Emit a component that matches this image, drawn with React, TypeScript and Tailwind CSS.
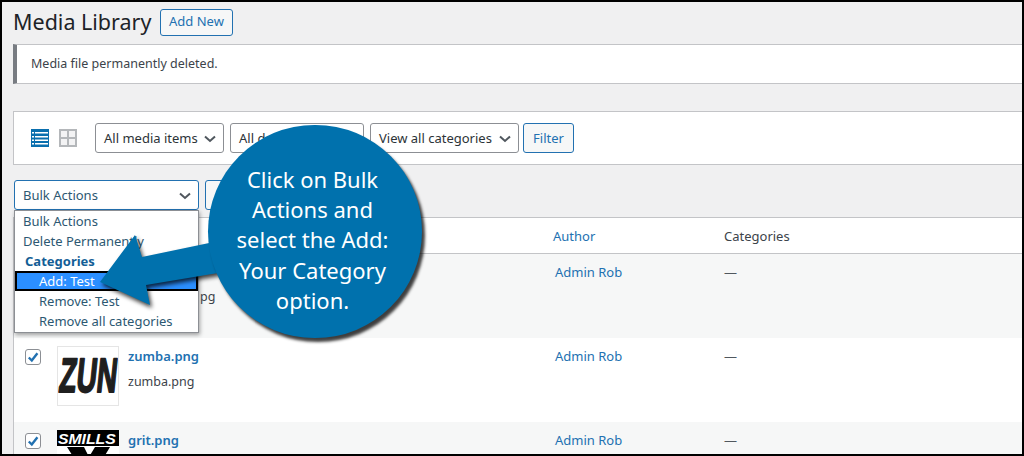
const segoe = "font-['Noto_Sans',sans-serif]";

function Chevron({ className = "text-[#50575e]" }: { className?: string }) {
    return (
        <svg width="12" height="8" viewBox="0 0 12 8" className={className} fill="none" stroke="currentColor" strokeWidth="2">
            <path d="M1 1.5 6 6l5-4.5" />
        </svg>
    );
}

function SelectBox({ label, width }: { label: string; width: string }) {
    return (
        <div className={`flex h-[30px] items-center justify-between rounded-[3px] border border-[#8c8f94] bg-white pl-2 pr-[7px] pt-[1px] text-[13px] text-[#2c3338] ${width}`}>
            <span>{label}</span>
            <Chevron />
        </div>
    );
}

function ListIcon() {
    return (
        <svg width="18" height="18" viewBox="0 0 18 18" className="text-[#0a6fae]">
            <path fill="currentColor" d="M0 0h18v18H0z" />
            <path fill="#fff" d="M4 3h13v1.5H4zM4 7h13v1.5H4zM4 10.500h13V12H4zM4 14h13v1.500H4zM1 3h2v1.500H1zM1 7h2v1.500H1zM1 10.500h2V12H1zM1 14h2v1.500H1z" />
        </svg>
    );
}

function GridIcon() {
    return (
        <svg width="18" height="18" viewBox="0 0 18 18">
            <path fill="#b4b7ba" d="M0 0h18v18H0z" />
            <path fill="#f3f3f4" d="M2 2h6v6H2zM10 2h6v6h-6zM2 10h6v6H2zM10 10h6v6h-6z" />
        </svg>
    );
}

function Checkbox() {
    return (
        <div className="flex h-4 w-4 items-center justify-center rounded-[3px] border border-[#8c8f94] bg-white">
            <svg width="12" height="12" viewBox="0 0 12 12" fill="none" stroke="#2271b1" strokeWidth="2.400">
                <path d="M1.800 6.500 4.800 9.500 10.400 2.200" />
            </svg>
        </div>
    );
}

function MediaRow({ title, file, thumb, bg, check = true }: { title: string; file: string; thumb: React.ReactNode; bg: string; check?: boolean }) {
    return (
        <div className={`flex h-[84px] ${bg}`}>
            <div className="w-[43px] shrink-0 pl-[11px] pt-[11px]">{check && <Checkbox />}</div>
            <div className="w-[71px] shrink-0 pt-2">{thumb}</div>
            <div className="w-[427px] shrink-0 pt-2">
                <div className="text-[13px] font-semibold leading-5 text-[#2271b1]">{title}</div>
                <div className="mt-[6px] text-[12.500px] leading-5 text-[#3c434a]">{file}</div>
            </div>
            <div className="w-[169px] shrink-0 pt-2 text-[13px] leading-5 text-[#2271b1]">Admin Rob</div>
            <div className="pt-2 text-[13px] leading-5 text-[#50575e]">—</div>
        </div>
    );
}

export default function App() {
    return (
        <div className={`relative h-[456px] w-[1024px] overflow-hidden border-x-2 border-y-2 border-black bg-[#f0f0f1] ${segoe}`}>
            <div className="flex h-[42px] items-center pb-[2px] pl-[11px]">
                <h1 className="w-[138px] whitespace-nowrap text-[21.500px] font-normal leading-none text-[#1d2327]">Media Library</h1>
                <div className="ml-[9px] flex h-[27px] w-[73px] items-center justify-center rounded-[3px] border border-[#2271b1] bg-[#f6f7f7] text-[13px] text-[#2271b1]">Add New</div>
            </div>

            <div className="ml-[11px] flex h-[40px] items-center border border-l-4 border-r-0 border-[#c3c4c7] border-l-[#787c82] bg-white pl-[14px] pt-[1px] text-[12.500px] text-[#3c434a]">
                Media file permanently deleted.
            </div>

            <div className="ml-[11px] mt-[27px] flex h-[54px] items-center border border-r-0 border-[#c3c4c7] bg-white pl-[17px]">
                <ListIcon />
                <div className="ml-[10px]"><GridIcon /></div>
                <div className="ml-[18px] flex gap-[6px]">
                    <SelectBox label="All media items" width="w-[129px]" />
                    <SelectBox label="All dates" width="w-[134px]" />
                    <SelectBox label="View all categories" width="w-[149px]" />
                </div>
                <div className="ml-1 flex h-[30px] w-[51px] items-center justify-center rounded-[3px] border border-[#2271b1] bg-[#f6f7f7] pt-[1px] text-[13px] text-[#2271b1]">Filter</div>
            </div>

            <div className="ml-3 mt-[15px] flex gap-[6px]">
                <div className="flex h-[30px] w-[185px] items-center justify-between rounded-[3px] border border-[#2271b1] bg-white pl-2 pr-[7px] pt-[1px] text-[13px] text-[#2c5872]">
                    <span>Bulk Actions</span>
                    <Chevron />
                </div>
                <div className="h-[30px] w-[60px] rounded-[3px] border border-[#2271b1] bg-[#f6f7f7]" />
            </div>

            <div className="ml-[11px] mt-[7px] border-l border-t border-[#c3c4c7] bg-white">
                <div className="flex h-[36px] items-center border-b border-[#c3c4c7] pt-[2px] text-[13px] text-[#2271b1]">
                    <span className="ml-[539px] w-[171px]">Author</span>
                    <span className="text-[#3c434a]">Categories</span>
                </div>
                <MediaRow title="" file="" bg="bg-[#f6f7f7]" check={false} thumb={<div className="h-[60px] w-[62px]" />} />
                <MediaRow
                    title="zumba.png"
                    file="zumba.png"
                    bg="bg-white"
                    thumb={
                        <svg width="62" height="60" viewBox="0 0 62 60" className="border border-[#e5e5e5] bg-white">
                            <text transform="translate(0 47) scale(0.58 1) skewX(-10)" fontFamily="Liberation Sans" fontSize="50" fontWeight="700" fill="#1f1f1f" stroke="#1f1f1f" strokeWidth="2" strokeLinejoin="round">
                                ZUN
                            </text>
                        </svg>
                    }
                />
                <MediaRow
                    title="grit.png"
                    file=""
                    bg="bg-[#f6f7f7]"
                    thumb={
                        <svg width="62" height="60" viewBox="0 0 62 60" className="bg-white">
                            <path fill="#000" d="M0 0h62v16H0z" />
                            <text transform="translate(1 14) scale(1.05 1)" fontFamily="Liberation Sans" fontSize="15" fontWeight="700" fontStyle="italic" fill="#fff">
                                SMILLS
                            </text>
                            <path fill="#000" d="M10 17h17l5 10 6-10h15L38 42H26z" />
                        </svg>
                    }
                />
            </div>

            <div className="absolute left-[12px] top-[208px] h-[123px] w-[185px] border border-[#8c8f94] bg-white text-[13px] leading-5 text-[#2c5872] shadow-[1px_2px_4px_rgba(0,0,0,0.35)]">
                <div className="pl-2">Bulk Actions</div>
                <div className="pl-2">Delete Permanently</div>
                <div className="pl-[10px] font-bold text-[#135e96]">Categories</div>
                <div className="border-2 border-black bg-[#2b8fff] pl-[22px] leading-4 text-white">Add: Test</div>
                <div className="pl-6">Remove: Test</div>
                <div className="pl-6">Remove all categories</div>
            </div>

            <div className="absolute left-[198px] top-[285px] text-[12.500px] leading-5 text-[#3c434a]">pg</div>

            <svg width="140" height="90" viewBox="0 0 140 90" className="absolute left-[96px] top-[230px] drop-shadow-[2px_3px_2px_rgba(0,0,0,0.75)]">
                <path fill="#0071ad" d="M2 50 37 3l7 22 72-15 4 31-72 12 4 20z" />
            </svg>

            <div className="absolute left-[206px] top-[123px] flex h-[213px] w-[214px] items-center justify-center rounded-full bg-[#0071ad] pr-[5px] pt-[16px] text-center text-[22px] leading-[30.300px] text-white shadow-[3px_4px_3px_rgba(0,0,0,0.75)]">
                <div>
                    Click on Bulk
                    <br />
                    Actions and
                    <br />
                    select the Add:
                    <br />
                    Your Category
                    <br />
                    option.
                </div>
            </div>
        </div>
    );
}
